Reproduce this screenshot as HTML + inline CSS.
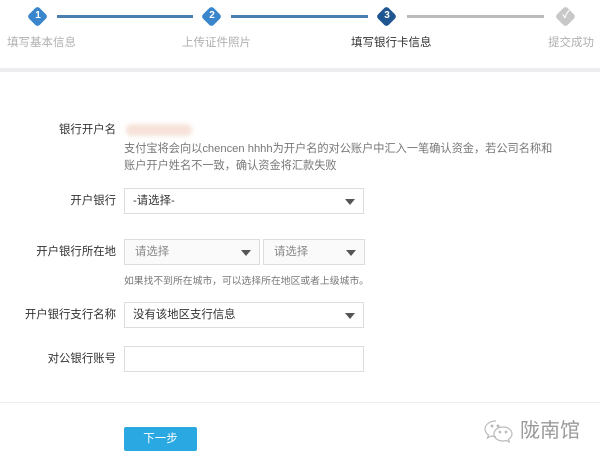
<!DOCTYPE html>
<html><head><meta charset="utf-8"><style>
body{margin:0;width:600px;height:459px;background:#fff;font-family:"Liberation Sans","Noto Sans CJK SC",sans-serif;position:relative;overflow:hidden;color:#333}
.a{position:absolute}
.dia{position:absolute;width:15px;height:15px;transform:rotate(45deg);border-radius:3px}
.num{position:absolute;width:22px;text-align:center;color:#fff;font-size:10px;font-weight:bold;line-height:22px}
.line{position:absolute;height:3px;top:15px}
.step{position:absolute;top:34px;font-size:11.5px;color:#b0b0b0}
.lbl{position:absolute;font-size:11.4px;color:#333;text-align:right;width:116px;left:0;line-height:14px}
.sel{position:absolute;border:1px solid #ddd;background:#fff;box-sizing:border-box;font-size:11.4px;color:#333;padding-left:8px;line-height:24px}
.sel .tri{position:absolute;right:8px;top:10px;width:0;height:0;border-left:5px solid transparent;border-right:5px solid transparent;border-top:6px solid #555}
.hint{position:absolute;font-size:11.2px;color:#777;left:124px;white-space:nowrap}
</style></head><body>
<div class="a" style="left:0;top:68px;width:600px;height:4px;background:#ededef"></div>
<div class="line" style="left:57px;width:136px;background:#4a7fb0"></div>
<div class="line" style="left:231px;width:137px;background:#4a7fb0"></div>
<div class="line" style="left:407px;width:137px;background:#bbb"></div>
<div class="dia" style="left:30px;top:9px;background:#3a86cc"></div><div class="num" style="left:27px;top:5px">1</div>
<div class="dia" style="left:204px;top:9px;background:#3a86cc"></div><div class="num" style="left:201px;top:5px">2</div>
<div class="dia" style="left:379px;top:9px;background:#1f5591"></div><div class="num" style="left:376px;top:5px">3</div>
<div class="dia" style="left:558px;top:9px;background:#c8c8c8"></div><div class="num" style="left:555px;top:5px">✓</div>
<div class="step" style="left:7px">填写基本信息</div>
<div class="step" style="left:182px">上传证件照片</div>
<div class="step" style="left:351px;color:#333">填写银行卡信息</div>
<div class="step" style="left:548px">提交成功</div>

<div class="lbl" style="top:123px">银行开户名</div>
<div class="a" style="left:126px;top:124px;width:66px;height:12px;background:#f6e2d8;border-radius:6px;filter:blur(2px)"></div>
<div class="hint" style="top:140px">支付宝将会向以chencen hhhh为开户名的对公账户中汇入一笔确认资金，若公司名称和</div>
<div class="hint" style="top:157px">账户开户姓名不一致，确认资金将汇款失败</div>

<div class="lbl" style="top:194px">开户银行</div>
<div class="sel" style="left:124px;top:188px;width:240px;height:26px">-请选择-<span class="tri"></span></div>

<div class="lbl" style="top:245px">开户银行所在地</div>
<div class="sel" style="left:124px;top:239px;width:136px;height:26px;background:#fafafa;color:#888;padding-left:10px">请选择<span class="tri"></span></div>
<div class="sel" style="left:263px;top:239px;width:102px;height:26px;background:#fafafa;color:#888;padding-left:10px">请选择<span class="tri"></span></div>
<div class="hint" style="top:273px;font-size:9.8px">如果找不到所在城市，可以选择所在地区或者上级城市。</div>

<div class="lbl" style="top:308px">开户银行支行名称</div>
<div class="sel" style="left:124px;top:302px;width:240px;height:26px">没有该地区支行信息<span class="tri"></span></div>

<div class="lbl" style="top:352px">对公银行账号</div>
<div class="sel" style="left:124px;top:346px;width:240px;height:26px"></div>

<div class="a" style="left:0;top:402px;width:600px;height:1px;background:#eee"></div>
<div class="a" style="left:124px;top:427px;width:73px;height:24px;background:#2aa8e2;border-radius:2px;color:#fff;font-size:11.5px;text-align:center;line-height:24px">下一步</div>
<svg class="a" style="left:483px;top:419px" width="32" height="24" viewBox="0 0 32 24" fill="none" stroke="#bbb" stroke-width="1.2">
<path d="M13 2C7 2 2 5.5 2 10c0 2.5 1.5 4.5 3.5 6l-1 3 3.5-2c1.5.5 3 .7 5 .7"/>
<path d="M20 8c-5 0-9 3-9 7s4 7 9 7c1.2 0 2.3-.2 3.3-.5l3 1.5-.8-2.7c2-1.3 3.5-3.2 3.5-5.3 0-4-4-7-9-7z"/>
<circle cx="9" cy="7" r="0.9" fill="#bbb"/><circle cx="15" cy="7" r="0.9" fill="#bbb"/>
<circle cx="17" cy="13" r="0.8" fill="#bbb"/><circle cx="23" cy="13" r="0.8" fill="#bbb"/>
</svg>
<div class="a" style="left:520px;top:418px;font-size:20px;color:#9a9a9a;line-height:26px">陇南馆</div>
</body></html>
